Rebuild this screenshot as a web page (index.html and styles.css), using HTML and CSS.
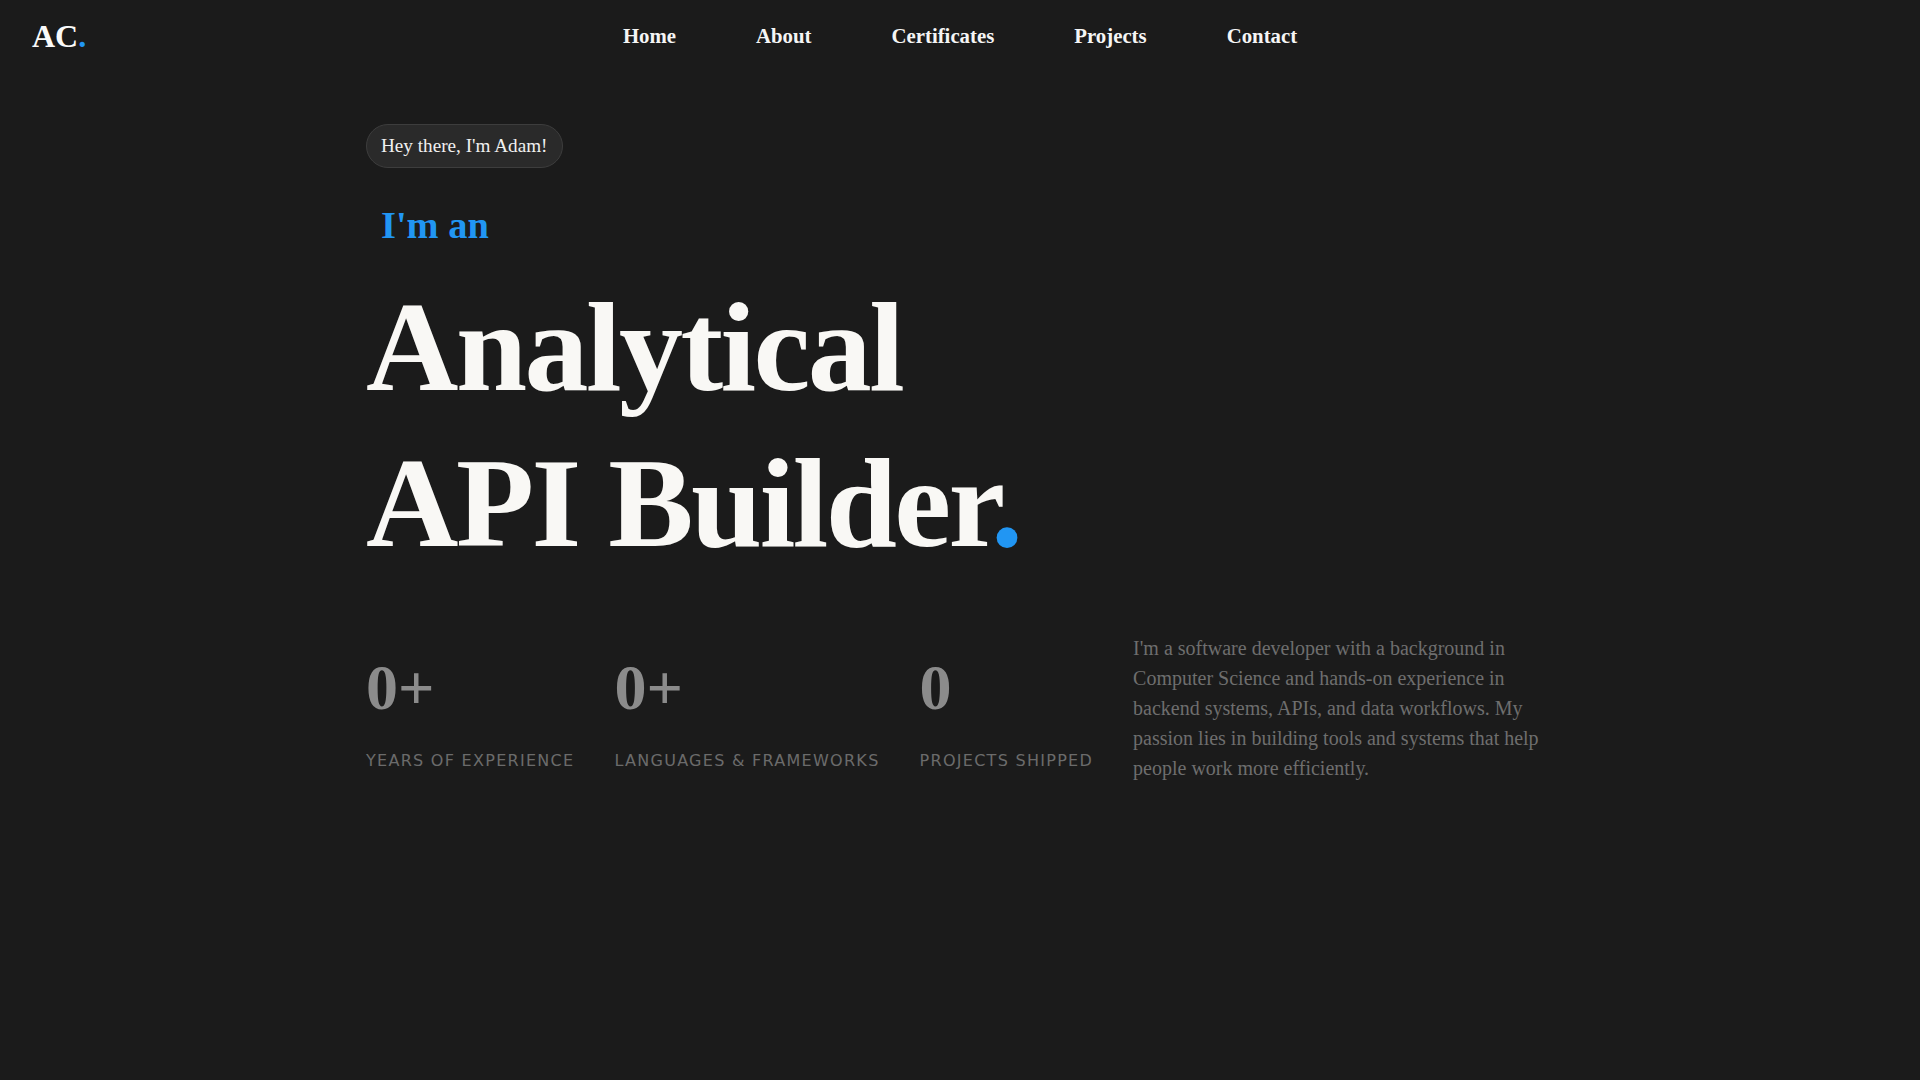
FILE: index.html
```html
<!DOCTYPE html>
<html lang="en">
<head>
<meta charset="utf-8">
<title>Adam — Portfolio</title>
<link rel="stylesheet" href="styles.css">
</head>
<body>
<header class="site-header">
  <a class="logo" href="#">AC<span class="accent">.</span></a>
  <nav class="main-nav">
    <a href="#">Home</a>
    <a href="#">About</a>
    <a href="#">Certificates</a>
    <a href="#">Projects</a>
    <a href="#">Contact</a>
  </nav>
  <div class="header-spacer"></div>
</header>
<main class="hero">
  <span class="greeting">Hey there, I'm Adam!</span>
  <p class="intro">I'm an</p>
  <h1 class="title">Analytical<br>API Builder<span class="accent">.</span></h1>
  <section class="summary">
    <div class="stat">
      <div class="stat-value">0+</div>
      <div class="stat-label">Years of experience</div>
    </div>
    <div class="stat">
      <div class="stat-value">0+</div>
      <div class="stat-label">Languages &amp; frameworks</div>
    </div>
    <div class="stat">
      <div class="stat-value">0</div>
      <div class="stat-label">Projects shipped</div>
    </div>
    <p class="bio">I'm a software developer with a background in Computer Science and hands-on experience in backend systems, APIs, and data workflows. My passion lies in building tools and systems that help people work more efficiently.</p>
  </section>
</main>
</body>
</html>
```

FILE: styles.css
```css
html, body {
  margin: 0;
  padding: 0;
}

body {
  background: #1b1b1b;
  color: #f5f5f5;
  font-family: "Liberation Serif", "Times New Roman", serif;
  min-height: 1080px;
}

.accent {
  color: #2196f3;
}

.site-header {
  height: 72px;
  padding: 0 32px;
  display: grid;
  grid-template-columns: 1fr auto 1fr;
  align-items: center;
}

.logo {
  justify-self: start;
  font-size: 32px;
  font-weight: 700;
  color: #fafafa;
  text-decoration: none;
}

.main-nav {
  display: flex;
  gap: 80px;
}

.main-nav a {
  font-size: 20.8px;
  font-weight: 700;
  color: #f5f5f5;
  text-decoration: none;
}

.hero {
  max-width: 1188px;
  margin: 0 auto;
  padding-top: 52px;
  display: flex;
  flex-direction: column;
  align-items: flex-start;
}

.greeting {
  display: inline-block;
  padding: 10px 14px;
  border: 1px solid #3d3d3d;
  border-radius: 999px;
  background: #2a2a2a;
  color: #f0f0f0;
  font-size: 19.2px;
}

.intro {
  margin: 35px 0 0 15px;
  font-size: 38.4px;
  font-weight: 700;
  color: #2196f3;
}

.title {
  margin: 22px 0 0;
  font-size: 128px;
  line-height: 156px;
  font-weight: 700;
  letter-spacing: -0.02em;
  color: #f9f8f5;
}

.summary {
  margin-top: 52px;
  display: flex;
  align-items: flex-start;
  gap: 40px;
}

.stat {
  margin-top: 23px;
}

.stat-value {
  font-size: 64px;
  line-height: 1;
  font-weight: 700;
  color: #8b8b8b;
}

.stat-label {
  margin-top: 31px;
  font-family: "DejaVu Sans", sans-serif;
  font-size: 16px;
  letter-spacing: 1.28px;
  text-transform: uppercase;
  color: #6b6b6b;
  white-space: nowrap;
}

.bio {
  width: 420px;
  margin: 0;
  font-size: 20px;
  line-height: 30px;
  color: #6e6e6e;
}
```
